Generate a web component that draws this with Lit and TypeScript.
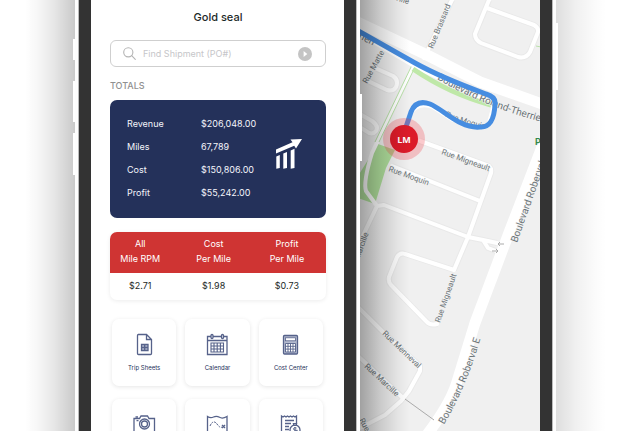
import { LitElement, html, svg, css } from "lit";
import { customElement } from "lit/decorators.js";

const totals = [
  ["Revenue", "$206,048.00"],
  ["Miles", "67,789"],
  ["Cost", "$150,806.00"],
  ["Profit", "$55,242.00"],
];

const rates = [
  { top: "All", bottom: "Mile RPM", value: "$2.71" },
  { top: "Cost", bottom: "Per Mile", value: "$1.98" },
  { top: "Profit", bottom: "Per Mile", value: "$0.73" },
];

const icons = {
  sheet: svg`<path d="M6 2.5h8.500l5 5V21.500Q19.500 22.500 18.500 22.500H6.500Q5.500 22.500 5.500 21.500V3.500Q5.500 2.500 6.500 2.500zM14.500 2.500V7.500H19.500" />
    <path d="M9.500 12.500h6.500v6H9.500zM9.500 15.500H16M12.700 12.500v6" fill="#b4bbcf" stroke-width="1.3" />`,
  calendar: svg`<path d="M2.500 4.500h19.500v18h-19.500zM2.500 8.500h19.500" />
    <path d="M6 11h12.500v9H6zM6 14h12.500M6 17h12.500M9 11v9M12.200 11v9M15.400 11v9" stroke-width="1.1" />
    <rect x="6" y="2.500" width="2" height="4" rx="1" fill="#fff" /><rect x="16.500" y="2.500" width="2" height="4" rx="1" fill="#fff" />`,
  calculator: svg`<rect x="5.500" y="3.500" width="14" height="18.500" rx="1" fill="#b4bbcf" />
    <rect x="7.500" y="5.800" width="10" height="3" fill="#fff" stroke-width=".8" />
    <path d="M7.500 11.500h10v8.500h-10z" fill="#fff" stroke-width=".9" />
    <path d="M7.500 14.300h10M7.500 17.100h10M10 11.500V20M12.500 11.500V20M15 11.500V20" stroke-width=".9" />`,
  camera: svg`<path d="M2 6.500h5.500l1.500-2.500h6.500l1.500 2.500h5.500v15H2z" /><circle cx="12.500" cy="12" r="5" /><circle cx="12.500" cy="12" r="3" />
    <path d="M4.500 8.700h2M3.500 5h2.500" />`,
  route: svg`<path d="M2.500 4.500q3 2 6 .500t6 .300 7.500-.800V24h-19.500z" /><path d="M5 14c2-5 5-5 7-2s4 4 5 3" stroke-dasharray="2 1" stroke-width="1" />
    <path d="M17 13l3 3M20 13l-3 3" />`,
  receipt: svg`<path d="M18.500 11V4l-1.500 1-1.500-1-1.500 1-1.500-1-1.500 1-1.500-1-1.500 1-1.500-1-1.500 1-1.500-1V24" /><path d="M7 8.500h9M7 11.500h6M7 14.500h4M7 17.500h4" />
    <circle cx="17" cy="18" r="5" /><path d="M15 11.500h4l-1 2h-2zM17 15v6M18.500 16q-3-1-3 .800t3 1.500-3 1.500" stroke-width="1" />`,
};

const tiles = [
  { label: "Trip Sheets", icon: icons.sheet },
  { label: "Calendar", icon: icons.calendar },
  { label: "Cost Center", icon: icons.calculator },
  { label: "", name: "Photos", icon: icons.camera },
  { label: "", name: "Routes", icon: icons.route },
  { label: "", name: "Invoices", icon: icons.receipt },
];

@customElement("street-map")
class StreetMap extends LitElement {
  static styles = css`
    :host { display: block; height: 100%; background: #f0f0f0; }
    svg { display: block; width: 100%; height: 100%; }
    .road { fill: none; stroke: #fff; stroke-width: 4; stroke-linecap: round; stroke-linejoin: round; }
    .outline { fill: none; stroke: #e9e9e9; stroke-width: 6; stroke-linejoin: round; }
    .wide { stroke-width: 11; }
    .park { fill: #b0df9c; }
    .strip { fill: none; stroke: #bfe8a8; stroke-width: 5; }
    .thin { fill: none; stroke: #b8e0a8; stroke-width: 1; }
    .path { fill: none; stroke: #aaa; stroke-width: 1; }
    .route { fill: none; stroke: #468de1; stroke-width: 5; stroke-linejoin: round; }
    text { font-family: Roboto, sans-serif; font-size: 8px; fill: #6c7478; stroke: #f4f4f4; stroke-width: 1; paint-order: stroke; }
    .major { font-size: 10px; }
    .place { font-size: 9px; font-weight: 700; fill: #35894a; }
    .driver { font-family: "Open Sans", sans-serif; font-size: 9px; font-weight: 700; fill: #fff; stroke: none; text-anchor: middle; }
  `;

  render() {
    const streets =
      "M452 0L424 58 M489 0L475 34Q475 40 481 43L518 57Q526 59 530 52L538 32Q539 28 534 25L487 8 " +
      "M375 68L393 76Q399 80 396 87Q393 92 387 90L368 81 M358 113L372 121Q379 126 376 131Q372 136 366 131L358 126 " +
      "M420 141L489 166Q492 169 491 173L468 237L454 270 M392 166L480 201 " +
      "M358 246L377 206L384 205L468 237L483 240L497 243 M483 240L488 248L496 251 " +
      "M454 270L405 254Q400 252 397 257L389 277Q388 282 391 285L426 321Q430 326 437 324 " +
      "M358 307L383 332L420 366V371L409 391L401 401L385 415L358 429 M358 356L403 398";
    return html`
      <svg viewBox="360 0 180 431" preserveAspectRatio="xMinYMin slice" role="img" aria-label="Delivery route">
        <defs>
          <path id="roland" d="M437 79Q464 95 495 107T575 130" />
          <path id="roberval" d="M444 425C462 393 472 370 486 320" />
          <path id="roberval-north" d="M517 243L575 79" />
          <path id="moquin" d="M445 116Q463 125 495 131" />
        </defs>
        <path class="outline" d=${streets} />
        <path class="road" d=${streets} />
        <path class="park" d="M378 144L395 150L386 168L375 204L358 198V176Z" />
        <path class="road" d="M413 67L372 153Q363 182 366 191L377 206" stroke-width="2" />
        <path class="thin" d="M412 65L375 142M415 67L379 142" />
        <path class="road wide" d="M355 21L425 54L480 82L545 105" />
        <path class="road" d="M355 31L416 67L445 81L494 104L489 123" />
        <path class="road" d="M410 114Q418 101 433 107L453 120" />
        <path class="road wide" d="M550 126L510 230L475 323L456 385Q449 406 426 436" />
        <path class="path" d="M405 399L434 420" />
        <path class="strip" d="M413 69Q450 94 491 105" />
        <text transform="translate(395 0) rotate(18)">ville</text>
        <text transform="translate(433 49) rotate(-68)">Rue Brassard</text>
        <text transform="translate(367 84) rotate(-61)">Rue Matte</text>
        <text transform="translate(441 154) rotate(20)">Rue Migneault</text>
        <text transform="translate(388 171) rotate(20)">Rue Moquin</text>
        <text transform="translate(359 260) rotate(-70)">Marcille</text>
        <text transform="translate(440 323) rotate(-71)">Rue Migneault</text>
        <text transform="translate(382 334) rotate(44)">Rue Menneval</text>
        <text transform="translate(364 367) rotate(43)">Rue Marcille</text>
        <text transform="translate(359 420) rotate(62)">Rue</text>
        <path class="path" d="M504 244H498M500 242L498 244L500 246M492 251H498M496 249L498 251L496 253" />
        <text><textPath href="#moquin">Rue Moquin</textPath></text>
        <text class="major" transform="translate(358 38) rotate(27)">rien</text>
        <text class="major"><textPath href="#roland">Boulevard Roland-Therrien</textPath></text>
        <text class="major"><textPath href="#roberval">Boulevard Roberval E</textPath></text>
        <text class="major"><textPath href="#roberval-north">Boulevard Roberval</textPath></text>
        <text class="place" x="535" y="145">P</text>
        <path class="thin" d="M536 46L541 47" />
        <path class="route" d="M355 29L415 63Q440 77 486 94Q496 97 495 104Q494 128 480 127C460 129 443 109 430 104Q416 99 411 112L406 127" />
        <circle cx="404" cy="139" r="21" fill="#ef3a45" fill-opacity=".27" />
        <circle cx="404" cy="139" r="14" fill="#dc1b29" />
        <text class="driver" x="404" y="143">LM</text>
      </svg>
    `;
  }
}

@customElement("app-root")
class AppRoot extends LitElement {
  static styles = css`
    :host { display: block; font-family: Inter, sans-serif; color: #1c2a28; }
    * { box-sizing: border-box; }
    .stage { display: grid; grid-template-columns: 75fr 285fr 196fr 85fr; height: 100vh; overflow: hidden; background: #fff; }
    .phone { position: relative; background: #fdfdfd; min-width: 0; height: 100vh; }
    .front { grid-column: 2; z-index: 1; padding: 0 4px; }
    .back { grid-column: 3; padding-right: 4px; }
    .screen { height: 100%; border: solid #333; border-width: 0 12px; background: #fff; overflow: hidden; box-shadow: 0 0 0 1px #bbb; }
    .back .screen { border-left: 0; }
    .shade { position: absolute; top: 0; bottom: 0; width: 50px; pointer-events: none; }
    .shade-left { right: 100%; background: linear-gradient(to left, rgba(0,0,0,.21), rgba(0,0,0,.1) 40%, rgba(0,0,0,.03) 75%, transparent); }
    .shade-right { left: 100%; background: linear-gradient(to right, rgba(0,0,0,.33), rgba(0,0,0,.16) 40%, rgba(0,0,0,.05) 75%, transparent); }
    .back .shade-right { background: linear-gradient(to right, rgba(0,0,0,.13), rgba(0,0,0,.06) 40%, rgba(0,0,0,.02) 75%, transparent); }
    .key { position: absolute; width: 2px; background: #fff; }
    .key-left { right: 100%; }
    .key-right { left: 100%; }
    .mute { top: 39px; height: 21px; }
    .up { top: 81px; height: 41px; }
    .down { top: 133px; height: 42px; }
    .power { top: 94px; height: 67px; }
    .back .power { top: 23px; }

    .content { padding: 8px 18px 0 19px; }
    h1 { margin: 0 0 14px; font-size: 11px; line-height: 18px; font-weight: 500; text-align: center; }
    .search { display: flex; align-items: center; gap: 7px; height: 27px; padding: 0 13px 0 12px; border: 1px solid #cfcfcf; border-radius: 6px; }
    .search label { display: flex; }
    .search input { flex: 1; min-width: 0; padding: 0; border: 0; outline: 0; background: none; font: 9px/14px Inter, sans-serif; color: #555; }
    .search input::placeholder { color: #c6c6c9; opacity: 1; }
    .search button { display: flex; padding: 0; border: 0; background: none; }
    h2 { margin: 12px 0 7px; font-size: 9px; line-height: 14px; font-weight: 500; color: #909090; }
    .totals { display: flex; align-items: center; padding: 12px 24px 14px 17px; border-radius: 7px; background: #24315a; color: #f4f5fa; font-size: 9px; line-height: 23px; }
    .totals table { border-collapse: collapse; }
    .totals th { width: 74px; padding: 0; font-weight: 400; text-align: left; }
    .totals td { padding: 0; }
    .totals svg { margin: 0 0 8px auto; }
    .rates { width: 100%; margin-top: 14px; table-layout: fixed; border-spacing: 0; border-radius: 7px; overflow: hidden; box-shadow: 0 1px 4px rgba(0,0,0,.08); font-size: 9px; text-align: center; }
    .rates th { height: 41px; padding: 0 0 4px; background: #cf3433; color: #fff; font-weight: 400; line-height: 15px; }
    .rates td { height: 27px; padding: 0 0 2px; line-height: 15px; }
    .rates th:nth-child(1) { width: 28%; }
    .rates th:nth-child(2) { width: 40%; }
    .rates tr > :nth-child(3) { padding-right: 9px; }
    .tiles { display: grid; grid-template-columns: repeat(3, 1fr); gap: 13px 9px; padding: 19px 3px 0 2px; }
    .tile { display: flex; flex-direction: column; align-items: center; gap: 6px; height: 67px; padding: 13px 0 0; border: 0; border-radius: 7px; background: #fff; box-shadow: 0 1px 4px rgba(0,0,0,.1); font: 400 6px/10px Inter, sans-serif; color: #24315a; }
    .tile svg { fill: none; stroke: #56628a; stroke-width: 1.3; }
  `;

  render() {
    return html`
      <main class="stage">
        <section class="phone front">
          <div class="screen">
            <div class="content">
              <h1>Gold seal</h1>
              <form class="search" role="search">
                <label for="shipment" aria-label="Find shipment">
                  <svg width="13" height="13" viewBox="0 0 13 13" fill="none" stroke="#b4b4b4" stroke-width="1.1" stroke-linecap="round"><circle cx="5.300" cy="5.300" r="4.600" /><path d="M8.700 8.700l3.600 3.600" /></svg>
                </label>
                <input id="shipment" type="text" placeholder="Find Shipment (PO#)" />
                <button type="button" aria-label="Search">
                  <svg width="14" height="14" viewBox="0 0 14 14"><circle cx="7" cy="7" r="7" fill="#c4c4c4" /><path d="M5.600 4L9.300 7l-3.700 3z" fill="#fff" /></svg>
                </button>
              </form>
              <h2>TOTALS</h2>
              <div class="totals">
                <table>
                  ${totals.map(([name, value]) => html`<tr><th scope="row">${name}</th><td>${value}</td></tr>`)}
                </table>
                <svg width="26" height="30" viewBox="0 0 26 30" fill="#fff" aria-hidden="true">
                  <path d="M0 10.500L16.500 3.200 14.500 .500 26 0 20 9.500 18.200 6.800 0 14.500z" />
                  <path d="M.300 17.500l3.500-1.500V29l-3.500 .800zM7.300 14.500l3.700-1.500V29l-3.700 .800zM14.700 11.500l3.800-1.800V29l-3.800 .800z" />
                </svg>
              </div>
              <table class="rates">
                <thead><tr>${rates.map((r) => html`<th scope="col">${r.top}<br />${r.bottom}</th>`)}</tr></thead>
                <tbody><tr>${rates.map((r) => html`<td>${r.value}</td>`)}</tr></tbody>
              </table>
              <nav class="tiles">
                ${tiles.map((t) => html`<button class="tile" type="button" aria-label=${t.name ?? t.label}><svg width="25" height="25" viewBox="0 0 25 25" aria-hidden="true">${t.icon}</svg>${t.label}</button>`)}
              </nav>
            </div>
          </div>
          <span class="shade shade-left"></span>
          <span class="shade shade-right"></span>
          <span class="key key-left mute"></span>
          <span class="key key-left up"></span>
          <span class="key key-left down"></span>
          <span class="key key-right power"></span>
        </section>
        <section class="phone back">
          <div class="screen"><street-map></street-map></div>
          <span class="shade shade-right"></span>
          <span class="key key-right power"></span>
        </section>
      </main>
    `;
  }
}
